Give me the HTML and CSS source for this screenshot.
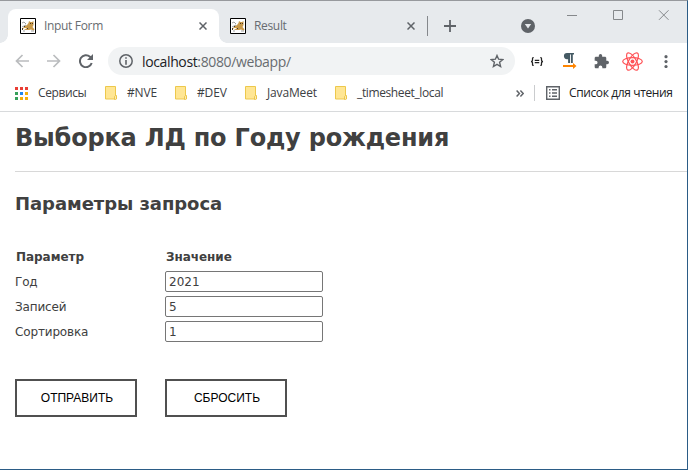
FILE: index.html
```html
<!DOCTYPE html>
<html lang="ru">
<head>
<meta charset="utf-8">
<title>Input Form</title>
<link rel="stylesheet" href="styles.css">
</head>
<body>
<svg class="defs" width="0" height="0" aria-hidden="true">
  <symbol id="tomcat" viewBox="0 0 16 16">
    <path fill="#fff" stroke="#000" d="M.5.5h15v15H.5z"/>
    <path fill="#c99a4b" d="M7 7l1.500-2L9 3l1.500 1H12l1.500-1v4l-1 2 2 2.500-1 1-2.500-1-2 .5H4l3-2H4L2 12l1-2 2-2z"/>
    <path fill="none" stroke="#777" stroke-width=".7" d="M2 5l2-1 2 2M2 9l2-1 2-1M3 13h2M11 13h3"/>
    <path fill="#4b3923" d="M10 5h1v1h-1zM12 5h1v1h-1zM4 8h1v1H4zM7 10h1v1H7zM2 10h1v2H2z"/>
  </symbol>
  <symbol id="close" viewBox="0 0 8 8"><path fill="none" stroke="#5f6368" stroke-width="1.5" d="M.5.5l7 7M7.500.5l-7 7"/></symbol>
  <symbol id="folder" viewBox="0 0 13 14">
    <path fill="#ffe694" stroke="#edc84c" d="M.5.500h10v9h1v3.500H.5z"/>
    <path fill="#fff2bd" stroke="#e8bd37" stroke-width=".8" d="M9.500 10.500l1-.8.9.8v2l-.9.900H9.500z"/>
  </symbol>
</svg>
<div class="window">
  <header class="tabstrip">
    <div class="tab active"><svg class="favicon"><use href="#tomcat"/></svg><span class="label">Input Form</span><svg class="close"><use href="#close"/></svg></div>
    <div class="tab"><svg class="favicon"><use href="#tomcat"/></svg><span class="label">Result</span><svg class="close"><use href="#close"/></svg></div>
    <i class="tab-divider"></i>
    <svg class="plus" viewBox="0 0 12 12"><path stroke="#5f6368" stroke-width="1.8" d="M6 0v12M0 6h12"/></svg>
    <svg class="search-tabs" viewBox="0 0 14 14"><circle cx="7" cy="7" r="7" fill="#5f6368"/><path fill="#e7eaed" d="M3.800 5h6.400L7 9.500z"/></svg>
    <svg class="controls" viewBox="0 0 104 12"><path fill="none" stroke="#85888b" d="M0 6.500h10M46.500 1.500h9v9h-9zM92 1.300l9.500 9.500M101.500 1.300L92 10.800"/></svg>
  </header>
  <nav class="toolbar">
    <svg class="back" viewBox="0 0 14 14"><path fill="none" stroke="#babcbe" stroke-width="1.7" d="M14 7H1.500M7.500 1l-6 6 6 6"/></svg>
    <svg class="forward" viewBox="0 0 14 14"><path fill="none" stroke="#babcbe" stroke-width="1.700" d="M0 7h12.500M6.500 1l6 6-6 6"/></svg>
    <svg class="reload" viewBox="0 0 14 14"><path fill="none" stroke="#5f6368" stroke-width="2" d="M12.700 9A6 6 0 1 1 11 2.700L12.500 4.500"/><path fill="#5f6368" d="M14 0v6H8z"/></svg>
    <div class="omnibox">
      <svg class="info" viewBox="0 0 14 14"><circle cx="7" cy="7" r="6.200" fill="none" stroke="#5f6368" stroke-width="1.500"/><path fill="#5f6368" d="M6.200 3.200h1.600v1.600H6.200zM6.200 6h1.600v4.800H6.200z"/></svg>
      <span class="url"><b>localhost</b>:8080/webapp/</span>
      <svg class="star" viewBox="0 0 14 14"><path fill="none" stroke="#5f6368" stroke-width="1.400" d="M7 1.500l1.600 3.700 4.200.4-3.200 2.700 1 4.200L7 10.300l-3.600 2.200 1-4.200-3.200-2.700 4.200-.4z"/></svg>
    </div>
    <svg class="json" viewBox="0 0 14 10"><path fill="none" stroke="#222" stroke-width="1.400" d="M3.300.7H2.700Q2 .7 2 1.700v1.800Q2 5 .3 5 2 5 2 6.500v1.800q0 1 .7 1h.6M10.700.7h.6q.7 0 .7 1v1.800Q12 5 13.700 5 12 5 12 6.500v1.800q0 1-.7 1h-.6M4.500 3.700h5M4.500 6.300h5"/></svg>
    <svg class="pilcrow" viewBox="0 0 14 16"><path fill="#455a64" d="M4 0h7v1.500H9.800V10H7.900V1.500H7V10H5.100V6.200H4A3.100 3.100 0 0 1 4 0z"/><path fill="#ff8500" d="M0 12.100h10V10l3.500 3-3.500 3v-2.100H0z"/></svg>
    <svg class="puzzle" viewBox="1 1 22 22"><path fill="#5f6368" d="M20.500 11H19V7c0-1.100-.9-2-2-2h-4V3.500a2.500 2.500 0 0 0-5 0V5H4c-1.100 0-2 .9-2 2v3.800h1.500a2.700 2.700 0 0 1 0 5.400H2V20c0 1.100.9 2 2 2h3.800v-1.500a2.700 2.700 0 0 1 5.400 0V22H17c1.100 0 2-.9 2-2v-4h1.500a2.500 2.500 0 0 0 0-5z"/></svg>
    <svg class="react" viewBox="-10.500 -9.500 21 19"><g fill="none" stroke="#ff5357" stroke-width="1.200"><ellipse rx="9.800" ry="3.800"/><ellipse rx="9.800" ry="3.800" transform="rotate(60)"/><ellipse rx="9.800" ry="3.800" transform="rotate(120)"/></g><circle r="2" fill="#ff5357"/></svg>
    <svg class="menu" viewBox="0 0 4 13"><g fill="#5f6368"><circle cx="2" cy="1.700" r="1.600"/><circle cx="2" cy="6.600" r="1.600"/><circle cx="2" cy="11.500" r="1.600"/></g></svg>
  </nav>
  <nav class="bookmarks">
    <svg class="apps" viewBox="0 0 13 13"><path fill="#e93e35" d="M0 0h3v3H0zM5 0h3v3H5zM10 0h3v3h-3z"/><path fill="#36a05a" d="M0 5h3v3H0zM0 10h3v3H0z"/><path fill="#1f87ed" d="M5 5h3v3H5z"/><path fill="#f4af08" d="M10 5h3v3h-3zM5 10h3v3H5zM10 10h3v3h-3z"/></svg>
    <span class="bm services">Сервисы</span>
    <svg class="folder"><use href="#folder"/></svg><span class="bm nve">#NVE</span>
    <svg class="folder"><use href="#folder"/></svg><span class="bm dev">#DEV</span>
    <svg class="folder"><use href="#folder"/></svg><span class="bm java">JavaMeet</span>
    <svg class="folder"><use href="#folder"/></svg><span class="bm time">_timesheet_local</span>
    <svg class="more" viewBox="0 0 8 7"><path fill="none" stroke="#5f6368" stroke-width="1.500" d="M.6.6l2.800 2.900L.6 6.400M4.400.6l2.800 2.900-2.800 2.900"/></svg>
    <i class="divider"></i>
    <svg class="list" viewBox="0 0 14 14"><path fill="none" stroke="#5f6368" stroke-width="1.400" d="M.7.700h12.600v12.600H.7z"/><path fill="#5f6368" d="M3 3h1.500v1.500H3zM6 3h5v1.500H6zM3 6.200h1.500v1.500H3zM6 6.200h5v1.500H6zM3 9.500h1.500V11H3zM6 9.500h5V11H6z"/></svg>
    <span class="bm reading">Список для чтения</span>
  </nav>
  <main>
    <h1>Выборка ЛД по Году рождения</h1>
    <h2>Параметры запроса</h2>
    <form>
      <div class="row head"><span>Параметр</span><span>Значение</span></div>
      <label class="row"><span>Год</span><input value="2021"></label>
      <label class="row"><span>Записей</span><input value="5"></label>
      <label class="row"><span>Сортировка</span><input value="1"></label>
      <div class="row actions"><button type="button">ОТПРАВИТЬ</button><button type="button">СБРОСИТЬ</button></div>
    </form>
  </main>
</div>
</body>
</html>
```
FILE: styles.css
```css
* { box-sizing: border-box; }
body { margin: 0; font: 12px "Open Sans", sans-serif; color: #3c4043; }
svg { display: block; flex: none; }
.defs { position: absolute; }
.window { width: 688px; height: 470px; overflow: hidden; background: #fff; border-top: 1px solid #97999d; border-right: 1px solid #2b5c86; border-bottom: 1px solid #2b5c86; }
.tabstrip { height: 42px; padding: 8px 0 0 8px; background: #e7eaed; display: flex; }
.tab { position: relative; height: 34px; width: 210px; padding-left: 12px; display: flex; align-items: center; color: #686c70; }
.active { width: 211px; background: #fff; border-radius: 8px 8px 0 0; }
.active::before, .active::after { content: ""; position: absolute; bottom: 0; width: 8px; height: 8px; }
.active::before { left: -8px; background: radial-gradient(circle at 0 0, transparent 7.500px, #fff 8px); }
.active::after { right: -8px; background: radial-gradient(circle at 100% 0, transparent 7.500px, #fff 8px); }
.tab:not(.active) { padding-left: 11px; width: 208px; }
.favicon { width: 16px; height: 16px; }
.label { margin: 0 0 2px 8px; width: 155px; white-space: nowrap; letter-spacing: -.33px; }
.tab:not(.active) .label { width: 154px; }
.close { width: 8px; height: 8px; }
.tab:not(.active) .close { margin-left: -1px; }
.tab-divider { width: 1px; height: 20px; margin-top: 7px; background: #85888c; }
.plus { width: 12px; height: 12px; margin: 11px 0 0 16px; }
.search-tabs { width: 14px; height: 14px; margin: 10px 0 0 65px; }
.controls { width: 104px; height: 12px; margin: 0 0 0 32px; }
.toolbar { height: 36px; display: flex; align-items: center; padding-left: 15px; }
.back, .forward, .reload, .info, .star { width: 14px; height: 14px; }
.forward { margin-left: 18px; }
.reload { margin-left: 18px; }
.omnibox { width: 407px; height: 28px; margin-left: 15px; padding: 0 11px; display: flex; align-items: center; border-radius: 14px; background: #f1f3f4; }
.url { margin-left: 9px; width: 349px; font-size: 14px; letter-spacing: -.37px; color: #686c70; white-space: nowrap; }
.url b { font-weight: 400; color: #202124; }
.omnibox .star { margin-left: -1px; }
.json { width: 14px; height: 9px; margin-left: 15px; }
.pilcrow { width: 14px; height: 16px; margin-left: 19px; }
.puzzle { width: 15px; height: 15px; margin-left: 17px; }
.react { width: 21px; height: 19px; margin-left: 13px; }
.menu { width: 4px; height: 13px; margin-left: 21px; }
.bookmarks { height: 33px; padding: 0 0 4px 15px; display: flex; align-items: center; border-bottom: 1px solid #d8dadc; }
.apps { width: 13px; height: 13px; }
.bm { margin-left: 10px; margin-bottom: 2px; white-space: nowrap; flex: none; }
.folder { width: 13px; height: 14px; }
.services { width: 67px; letter-spacing: -.4px; }
.nve, .dev { width: 48px; }
.nve, .dev, .java, .time { margin-left: 9px; letter-spacing: -.15px; }
.java { width: 68px; }
.time { width: 159px; letter-spacing: -.38px; }
.more { width: 8px; height: 7px; }
.divider { width: 1px; height: 16px; background: #caccce; margin-left: 10px; }
.list { width: 14px; height: 14px; margin-left: 11px; }
.reading { margin-left: 9px; color: #202124; letter-spacing: -.38px; }
main { padding-left: 15px; font-family: "DejaVu Sans", sans-serif; color: #404040; }
h1 { margin: 0; height: 60px; padding-top: 11px; font-size: 24px; line-height: 30px; letter-spacing: -.2px; border-bottom: 1px solid #d8d8d8; white-space: nowrap; }
h2 { margin: 0; padding-top: 20px; height: 72px; font-size: 18px; line-height: 24px; letter-spacing: -.06px; }
.row { height: 25px; display: grid; grid-template-columns: 150px 158px; align-items: center; letter-spacing: -.15px; }
.head { font-weight: 700; padding-left: 1px; letter-spacing: -.05px; }
input { width: 158px; height: 21px; padding: 0 3px; font: inherit; color: inherit; letter-spacing: 0; border: 1px solid #767676; border-radius: 2px; }
.actions { height: 38px; margin-top: 35px; grid-template-columns: 122px 122px; gap: 28px; }
button { height: 38px; padding: 0 0 0 2px; background: #fff; border: 2px solid #505050; color: #000; font: 12px "Liberation Sans", sans-serif; }
```
